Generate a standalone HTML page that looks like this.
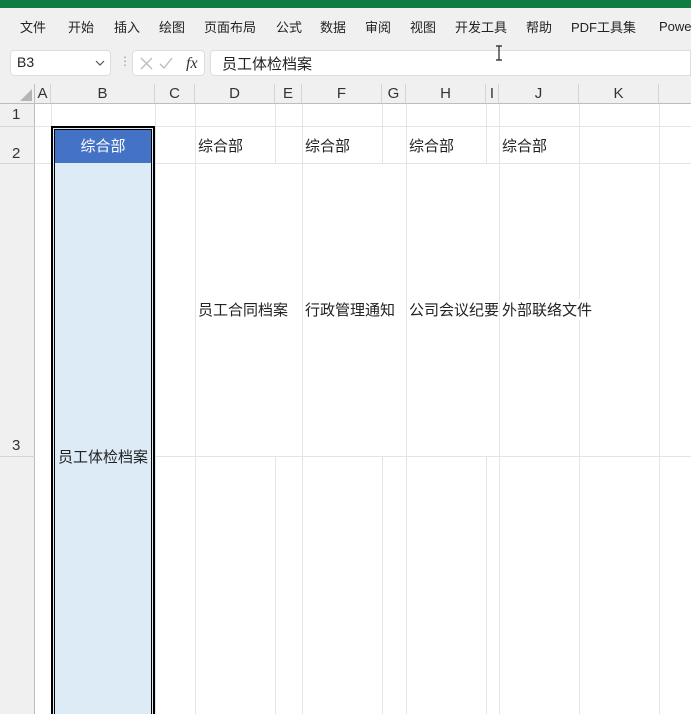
<!DOCTYPE html>
<html style="width:691px;height:714px;overflow:hidden"><head><meta charset="utf-8"><style>
*{margin:0;padding:0;box-sizing:border-box}
body{width:691px;height:714px;overflow:hidden;background:#fff;position:relative;font-family:"Liberation Sans","Noto Sans CJK SC",sans-serif;font-size:15px;color:#222}
.a{position:absolute}
.t{position:absolute;white-space:nowrap}
.m{position:absolute;white-space:nowrap;top:17px;font-size:13px}
.vl{position:absolute;width:1px;background:#e4e4e4}
.hl{position:absolute;height:1px;background:#e4e4e4}
.ch{position:absolute;top:84px;height:19px;text-align:center;font-size:15px;color:#333;line-height:19px;border-right:1px solid #d4d4d4}
</style></head><body>
<div class="a" style="left:0;top:0;width:691px;height:8px;background:#107c41"></div>
<div class="a" style="left:0;top:8px;width:691px;height:706px;background:#f0f0f0"></div>
<div class="m" style="left:20px">文件</div>
<div class="m" style="left:68px">开始</div>
<div class="m" style="left:114px">插入</div>
<div class="m" style="left:159px">绘图</div>
<div class="m" style="left:204px">页面布局</div>
<div class="m" style="left:276px">公式</div>
<div class="m" style="left:320px">数据</div>
<div class="m" style="left:365px">审阅</div>
<div class="m" style="left:410px">视图</div>
<div class="m" style="left:455px">开发工具</div>
<div class="m" style="left:526px">帮助</div>
<div class="m" style="left:571px">PDF工具集</div>
<div class="m" style="left:659px;top:19px">Powe</div>
<div class="a" style="left:10px;top:50px;width:101px;height:26px;background:#fff;border:1px solid #ddd;border-radius:4px"></div>
<div class="t" style="left:17px;top:54px;font-size:14px">B3</div>
<svg class="a" style="left:95px;top:59px" width="10" height="8"><path d="M1 2l4 4 4-4" stroke="#555" stroke-width="1.2" fill="none"/></svg>
<div class="t" style="left:119px;top:54px;font-size:12px;color:#999">⋮</div>
<div class="a" style="left:132px;top:50px;width:73px;height:26px;background:#fff;border:1px solid #ddd;border-radius:4px"></div>
<svg class="a" style="left:138px;top:55px" width="64" height="16"><path d="M3 3L14 14M14 3L3 14" stroke="#bbb" stroke-width="1.3" fill="none"/><path d="M22 9l4 4 8-10" stroke="#bbb" stroke-width="1.3" fill="none"/><text x="48" y="13" font-family="Liberation Serif" font-style="italic" font-size="16" fill="#333">fx</text></svg>
<div class="a" style="left:210px;top:50px;width:481px;height:26px;background:#fff;border:1px solid #ddd;border-radius:4px 0 0 4px"></div>
<svg class="a" style="left:494px;top:45px" width="10" height="16"><path d="M2 1h6M5 1v14M2 15h6" stroke="#222" stroke-width="1.2" fill="none"/></svg>
<div class="t" style="left:222px;top:53px">员工体检档案</div>
<div class="a" style="left:35px;top:104px;width:656px;height:610px;background:#fff"></div>
<div class="a" style="left:35px;top:84px;width:656px;height:19px;background:#f0f0f0"></div>
<div class="a" style="left:0;top:103px;width:691px;height:1px;background:#bdbdbd"></div>
<div class="a" style="left:34px;top:84px;width:1px;height:630px;background:#bdbdbd"></div>
<svg class="a" style="left:20px;top:89px" width="12" height="12"><path d="M12 0L12 12L0 12Z" fill="#b5b5b5"/></svg>
<div class="ch" style="left:35px;width:16px">A</div>
<div class="ch" style="left:51px;width:104px">B</div>
<div class="ch" style="left:155px;width:40px">C</div>
<div class="ch" style="left:195px;width:80px">D</div>
<div class="ch" style="left:275px;width:27px">E</div>
<div class="ch" style="left:302px;width:80px">F</div>
<div class="ch" style="left:382px;width:24px">G</div>
<div class="ch" style="left:406px;width:80px">H</div>
<div class="ch" style="left:486px;width:13px">I</div>
<div class="ch" style="left:499px;width:80px">J</div>
<div class="ch" style="left:579px;width:80px">K</div>
<div class="t" style="left:12px;top:106px;color:#333">1</div>
<div class="t" style="left:12px;top:145px;color:#333">2</div>
<div class="t" style="left:12px;top:437px;color:#333">3</div>
<div class="a" style="left:0;top:126px;width:35px;height:1px;background:#d4d4d4"></div>
<div class="a" style="left:0;top:163px;width:35px;height:1px;background:#d4d4d4"></div>
<div class="a" style="left:0;top:456px;width:35px;height:1px;background:#d4d4d4"></div>
<div class="hl" style="left:35px;top:126px;width:656px"></div>
<div class="hl" style="left:35px;top:163px;width:656px"></div>
<div class="hl" style="left:155px;top:456px;width:536px"></div>
<div class="vl" style="left:51px;top:104px;height:610px"></div>
<div class="vl" style="left:155px;top:104px;height:610px"></div>
<div class="vl" style="left:195px;top:104px;height:610px"></div>
<div class="vl" style="left:275px;top:104px;height:59px"></div>
<div class="vl" style="left:275px;top:457px;height:257px"></div>
<div class="vl" style="left:302px;top:104px;height:610px"></div>
<div class="vl" style="left:382px;top:104px;height:59px"></div>
<div class="vl" style="left:382px;top:457px;height:257px"></div>
<div class="vl" style="left:406px;top:104px;height:610px"></div>
<div class="vl" style="left:486px;top:104px;height:59px"></div>
<div class="vl" style="left:486px;top:457px;height:257px"></div>
<div class="vl" style="left:499px;top:104px;height:610px"></div>
<div class="vl" style="left:579px;top:104px;height:610px"></div>
<div class="vl" style="left:659px;top:104px;height:610px"></div>
<div class="a" style="left:51px;top:126px;width:104px;height:600px;background:#ddebf7;border:2px solid #000"></div>
<div class="a" style="left:54px;top:129px;width:98px;height:600px;border:1px solid #000"></div>
<div class="a" style="left:55px;top:130px;width:96px;height:33px;background:#4472c4"></div>
<div class="t" style="left:55px;top:135px;width:96px;text-align:center;color:#fff">综合部</div>
<div class="t" style="left:58px;top:446px">员工体检档案</div>
<div class="t" style="left:198px;top:135px">综合部</div>
<div class="t" style="left:305px;top:135px">综合部</div>
<div class="t" style="left:409px;top:135px">综合部</div>
<div class="t" style="left:502px;top:135px">综合部</div>
<div class="t" style="left:198px;top:299px">员工合同档案</div>
<div class="t" style="left:305px;top:299px;background:#fff">行政管理通知</div>
<div class="t" style="left:409px;top:299px;background:#fff">公司会议纪要</div>
<div class="t" style="left:502px;top:299px;background:#fff">外部联络文件</div>
</body></html>
